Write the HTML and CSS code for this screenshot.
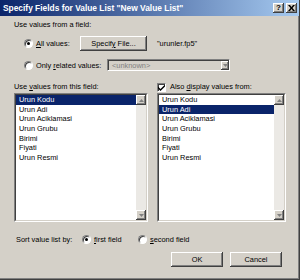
FILE: index.html
```html
<!DOCTYPE html>
<html lang="en">
<head>
    <meta charset="UTF-8">
    <title>Specify Fields for Value List</title>
    <link rel="stylesheet" href="styles.css">
</head>
<body>
    <div class="window">
        <div class="titlebar">
            <span class="title">Specify Fields for Value List "New Value List"</span>
            <div class="title-buttons">
                <span class="tbtn help">?</span>
                <span class="tbtn close">
                    <svg width="7" height="6" viewBox="0 0 7 6"><path d="M0 0h2l1.5 2 1.5-2h2l-2.5 3 2.5 3h-2l-1.5-2-1.5 2h-2l2.5-3z" fill="#000"/></svg>
                </span>
            </div>
        </div>

        <div class="content">
            <div class="heading">Use values from a field:</div>

            <div class="row row-all">
                <label class="option opt-all"><span class="radio checked"></span><span><u>A</u>ll values:</span></label>
                <span class="btn btn-specify"><span>Specif<u>y</u> File...</span></span>
                <span class="filename">"urunler.fp5"</span>
            </div>

            <div class="row row-related">
                <label class="option opt-related"><span class="radio"></span><span>Only <u>r</u>elated values:</span></label>
                <div class="select disabled">
                    <span class="select-text">&lt;unknown&gt;</span>
                    <span class="arrow-btn"><svg width="5" height="3" viewBox="0 0 5 3"><path d="M0 0h5l-2.5 3z" fill="#808080"/></svg></span>
                </div>
            </div>

            <div class="columns">
                <div class="col col-left">
                    <div class="col-label">Use <u>v</u>alues from this field:</div>
                    <div class="listbox">
                        <div class="listbox-inner">
                            <ul class="items">
                                <li class="selected">Urun Kodu</li>
                                <li>Urun Adi</li>
                                <li>Urun Aciklamasi</li>
                                <li>Urun Grubu</li>
                                <li>Birimi</li>
                                <li>Fiyati</li>
                                <li>Urun Resmi</li>
                            </ul>
                            <div class="scrollbar">
                                <span class="arrow-btn"><svg width="5" height="3" viewBox="0 0 5 3"><path d="M0 3h5l-2.5-3z" fill="#808080"/></svg></span>
                                <span class="track"></span>
                                <span class="arrow-btn"><svg width="5" height="3" viewBox="0 0 5 3"><path d="M0 0h5l-2.5 3z" fill="#808080"/></svg></span>
                            </div>
                        </div>
                    </div>
                </div>
                <div class="col col-right">
                    <label class="col-label check-label"><span class="checkbox"><svg width="7" height="7" viewBox="0 0 7 7"><path d="M0 2.5l2.5 2.5 4.5-4.5v2l-4.5 4.5-2.5-2.5z" fill="#000"/></svg></span><span>Also <u>d</u>isplay values from:</span></label>
                    <div class="listbox">
                        <div class="listbox-inner">
                            <ul class="items">
                                <li>Urun Kodu</li>
                                <li class="selected">Urun Adi</li>
                                <li>Urun Aciklamasi</li>
                                <li>Urun Grubu</li>
                                <li>Birimi</li>
                                <li>Fiyati</li>
                                <li>Urun Resmi</li>
                            </ul>
                            <div class="scrollbar">
                                <span class="arrow-btn"><svg width="5" height="3" viewBox="0 0 5 3"><path d="M0 3h5l-2.5-3z" fill="#808080"/></svg></span>
                                <span class="track"></span>
                                <span class="arrow-btn"><svg width="5" height="3" viewBox="0 0 5 3"><path d="M0 0h5l-2.5 3z" fill="#808080"/></svg></span>
                            </div>
                        </div>
                    </div>
                </div>
            </div>

            <div class="sort-row">
                <span class="sort-label">Sort value list by:</span>
                <label class="option opt-first"><span class="radio checked"></span><span><u>f</u>irst field</span></label>
                <label class="option"><span class="radio"></span><span><u>s</u>econd field</span></label>
            </div>

            <div class="actions">
                <span class="btn btn-action">OK</span>
                <span class="btn btn-action">Cancel</span>
            </div>
        </div>
    </div>
</body>
</html>
```

FILE: styles.css
```css
body {
    margin: 0;
    font-family: "Liberation Sans", Arial, sans-serif;
    font-size: 7.4px;
    color: #000;
    background-color: #d4d0c8;
}
u {
    text-decoration: underline;
    text-underline-offset: 1px;
}
.window {
    width: 300px;
    height: 280px;
    box-sizing: border-box;
    background-color: #d4d0c8;
    border-right: 1px solid #404040;
    border-bottom: 1px solid #404040;
    box-shadow: inset -1px -1px 0 #808080;
    overflow: hidden;
}
.titlebar {
    height: 16px;
    display: flex;
    align-items: center;
    padding: 0 2px 0 3px;
    background: linear-gradient(to right, #0a246a, #a6caf0);
}
.title {
    color: #fff;
    font-weight: bold;
    font-size: 8.4px;
    white-space: nowrap;
}
.title-buttons {
    margin-left: auto;
    display: flex;
    gap: 2px;
}
.tbtn {
    width: 11px;
    height: 10px;
    box-sizing: border-box;
    background-color: #d4d0c8;
    box-shadow: inset -1px -1px 0 #404040, inset 1px 1px 0 #fff, inset -2px -2px 0 #808080;
    display: flex;
    align-items: center;
    justify-content: center;
    font-weight: bold;
    font-size: 8px;
    line-height: 10px;
}
.content {
    padding: 4px 0 0 14px;
}
.heading {
    line-height: 10px;
}
.row {
    display: flex;
    align-items: center;
    white-space: nowrap;
}
.row-all {
    height: 15px;
    margin-top: 6px;
}
.row-related {
    height: 12px;
    margin-top: 8px;
}
.option {
    display: flex;
    align-items: center;
    gap: 3px;
    white-space: nowrap;
}
.opt-all,
.opt-related {
    margin-left: 10px;
}
.opt-all {
    width: 56px;
}
.opt-related {
    width: 83px;
}
.radio {
    width: 9px;
    height: 9px;
    flex: none;
    box-sizing: border-box;
    border-radius: 50%;
    border: 1px solid;
    border-color: #808080 #fff #fff #808080;
    background-color: #fff;
    box-shadow: inset 1px 1px 0 #404040;
    display: flex;
    align-items: center;
    justify-content: center;
}
.radio.checked::after {
    content: "";
    width: 3px;
    height: 3px;
    border-radius: 50%;
    background-color: #000;
}
.btn {
    height: 15px;
    box-sizing: border-box;
    display: flex;
    align-items: center;
    justify-content: center;
    white-space: nowrap;
    background-color: #d4d0c8;
    box-shadow: inset -1px -1px 0 #404040, inset 1px 1px 0 #fff, inset -2px -2px 0 #808080;
}
.btn-specify {
    width: 67px;
}
.filename {
    margin-left: 10px;
}
.select {
    width: 123px;
    height: 12px;
    box-sizing: border-box;
    display: flex;
    align-items: stretch;
    border: 1px solid;
    border-color: #808080 #fff #fff #808080;
    box-shadow: inset 1px 1px 0 #404040;
    padding: 1px 0 0 1px;
}
.select.disabled {
    background-color: #d4d0c8;
    color: #808080;
}
.select-text {
    flex: 1;
    padding-left: 3px;
    line-height: 9px;
}
.arrow-btn {
    width: 10px;
    height: 10px;
    box-sizing: border-box;
    flex: none;
    display: flex;
    align-items: center;
    justify-content: center;
    background-color: #d4d0c8;
    box-shadow: inset -1px -1px 0 #404040, inset 1px 1px 0 #fff, inset -2px -2px 0 #808080;
}
.select .arrow-btn {
    width: 8px;
    height: 9px;
}
.columns {
    display: flex;
    gap: 9px;
    margin-top: 11px;
}
.col-left {
    width: 134px;
}
.col-right {
    width: 129px;
}
.col-label {
    line-height: 10px;
    height: 10px;
    white-space: nowrap;
}
.check-label {
    display: flex;
    align-items: center;
    gap: 4px;
}
.checkbox {
    width: 9px;
    height: 9px;
    flex: none;
    box-sizing: border-box;
    border: 1px solid;
    border-color: #808080 #fff #fff #808080;
    background-color: #fff;
    box-shadow: inset 1px 1px 0 #404040;
    display: flex;
    align-items: center;
    justify-content: center;
}
.listbox {
    margin-top: 1px;
    height: 129px;
    box-sizing: border-box;
    border: 1px solid;
    border-color: #808080 #fff #fff #808080;
}
.listbox-inner {
    height: 100%;
    box-sizing: border-box;
    border: 1px solid;
    border-color: #404040 #d4d0c8 #d4d0c8 #404040;
    background-color: #fff;
    display: flex;
}
.items {
    flex: 1;
    list-style: none;
    margin: 0;
    padding: 0;
}
.items li {
    line-height: 9.7px;
    height: 9.7px;
    padding-left: 3px;
    white-space: nowrap;
}
.items li.selected {
    background-color: #0a246a;
    color: #fff;
}
.scrollbar {
    width: 10px;
    display: flex;
    flex-direction: column;
}
.track {
    flex: 1;
    background-color: #ebe9e5;
}
.sort-row {
    display: flex;
    align-items: center;
    height: 10px;
    margin-top: 12px;
    padding-left: 2px;
    white-space: nowrap;
}
.sort-label {
    width: 66px;
}
.opt-first {
    width: 56px;
}
.actions {
    display: flex;
    justify-content: flex-end;
    gap: 7px;
    margin-top: 8px;
    padding-right: 17px;
}
.btn-action {
    width: 52px;
}
```
